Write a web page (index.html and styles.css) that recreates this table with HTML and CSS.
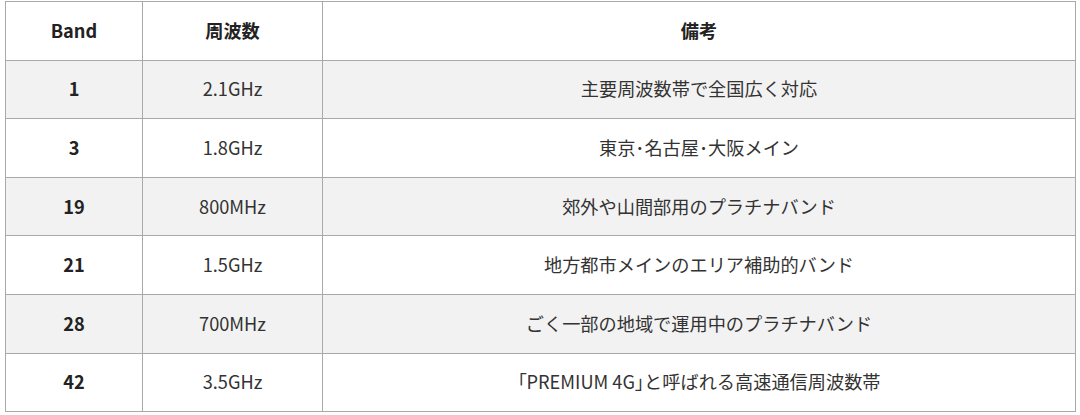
FILE: index.html
```html
<!DOCTYPE html>
<html lang="ja">
<head>
<meta charset="utf-8">
<link rel="stylesheet" href="styles.css">
</head>
<body>
<div class="wrap">
<table class="bands">
  <colgroup><col class="c1"><col class="c2"><col class="c3"></colgroup>
  <thead>
    <tr><th>Band</th><th>周波数</th><th>備考</th></tr>
  </thead>
  <tbody>
    <tr><td class="b">1</td><td>2.1GHz</td><td>主要周波数帯で全国広く対応</td></tr>
    <tr><td class="b">3</td><td>1.8GHz</td><td>東京･名古屋･大阪メイン</td></tr>
    <tr><td class="b">19</td><td>800MHz</td><td>郊外や山間部用のプラチナバンド</td></tr>
    <tr><td class="b">21</td><td>1.5GHz</td><td>地方都市メインのエリア補助的バンド</td></tr>
    <tr><td class="b">28</td><td>700MHz</td><td>ごく一部の地域で運用中のプラチナバンド</td></tr>
    <tr><td class="b">42</td><td>3.5GHz</td><td><span class="p">「</span>PREMIUM 4G<span class="p">」</span>と呼ばれる高速通信周波数帯</td></tr>
  </tbody>
</table>
</div>
</body>
</html>
```
FILE: styles.css
```css
html, body {
  margin: 0;
  padding: 0;
  background: #fff;
}
.wrap {
  padding: 1px 4px 0 5px;
}
.bands {
  width: 1071px;
  border-collapse: collapse;
  table-layout: fixed;
  font-family: "Segoe UI", "Noto Sans CJK JP", "Noto Sans", sans-serif;
  font-size: 18.2px;
  color: #333;
}
.c1 { width: 137px; }
.c2 { width: 180px; }
.bands th, .bands td {
  border: 1px solid #a9a9a9;
  text-align: center;
  vertical-align: middle;
  padding: 0 8px;
  height: 57.6px;
  line-height: 1.2;
}
.bands th {
  font-weight: bold;
  color: #222;
}
.bands td.b {
  font-weight: bold;
  color: #222;
}
.bands tbody tr:nth-child(odd) {
  background: #f2f2f2;
}
.p {
  font-feature-settings: "palt";
}
```
